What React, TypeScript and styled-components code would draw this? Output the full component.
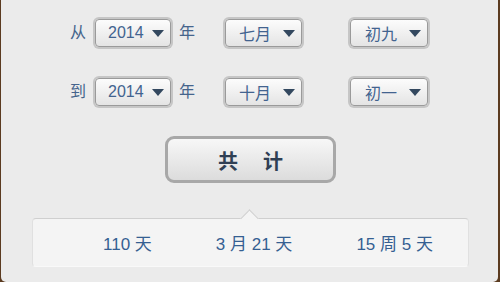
import React from "react";
import styled, { createGlobalStyle } from "styled-components";

const Global = createGlobalStyle`
  html, body { margin: 0; padding: 0; background: #5b3b20; }
  body { font-family: "Liberation Sans", "Noto Sans CJK SC", sans-serif; }
`;

const Window = styled.div`
  box-sizing: border-box;
  width: 497px;
  height: 282px;
  margin-left: 1px;
  background: #ebebeb;
  border-radius: 0 0 5px 5px;
  padding-top: 19px;
  display: flex;
  flex-direction: column;
  align-items: stretch;
  overflow: hidden;
`;

const Row = styled.div<{ $top?: number }>`
  display: flex;
  align-items: center;
  height: 28px;
  padding-left: 69px;
  margin-top: ${(p) => p.$top ?? 0}px;
`;

const Label = styled.span<{ $left?: number; $right?: number }>`
  font-size: 16px;
  color: #45648c;
  margin-left: ${(p) => p.$left ?? 0}px;
  margin-right: ${(p) => p.$right ?? 0}px;
  line-height: 1;
`;

const Select = styled.div<{ $w: number; $left?: number; $pl?: number }>`
  box-sizing: border-box;
  width: ${(p) => p.$w}px;
  height: 28px;
  margin-left: ${(p) => p.$left ?? 0}px;
  border: 1px solid #9a9a9a;
  border-radius: 4px;
  box-shadow: 0 0 0 2px #c6c6c6;
  background: linear-gradient(#fcfcfc, #e4e4e4);
  display: flex;
  align-items: center;
  justify-content: space-between;
  padding: 0 6px 0 ${(p) => p.$pl ?? 12}px;
  font-size: 16px;
  color: #42638f;
`;

const Arrow = styled.span`
  width: 0;
  height: 0;
  border-left: 6.5px solid transparent;
  border-right: 6.5px solid transparent;
  border-top: 7px solid #33485f;
  margin-top: 1px;
`;

const Button = styled.div`
  box-sizing: border-box;
  align-self: flex-start;
  margin: 30px 0 0 164px;
  width: 171px;
  height: 47px;
  border: 3px solid #a8a8a8;
  border-radius: 9px;
  background: linear-gradient(#f7f7f7, #dcdcdc);
  display: flex;
  align-items: center;
  justify-content: center;
  gap: 25px;
  padding-top: 1px;
  font-size: 20px;
  font-weight: bold;
  color: #2f3f54;
`;

const Panel = styled.div`
  position: relative;
  box-sizing: border-box;
  align-self: flex-start;
  margin: 35px 0 0 31px;
  width: 437px;
  height: 49px;
  background: #f4f4f4;
  border-top: 1px solid #cfcfcf;
  border-left: 1px solid #e0e0e0;
  border-right: 1px solid #e0e0e0;
  border-bottom: 1px solid #f9f9f9;
  border-radius: 4px;
  display: flex;
  align-items: center;
  padding: 4px 0 0 70px;
  gap: 64px;
  font-size: 17px;
  color: #355f92;

  &::before {
    content: "";
    position: absolute;
    left: 210px;
    top: -7px;
    width: 12px;
    height: 12px;
    background: #f4f4f4;
    border-top: 1px solid #cfcfcf;
    border-left: 1px solid #cfcfcf;
    transform: rotate(45deg);
  }
`;

const Result = styled.span`
  position: relative;
  line-height: 1;
  white-space: pre;
`;

export default function App() {
  return (
    <>
      <Global />
      <Window>
        <Row>
          <Label $right={9}>从</Label>
          <Select $w={76}>
            2014<Arrow />
          </Select>
          <Label $left={8}>年</Label>
          <Select $w={77} $left={30} $pl={13}>
            七月<Arrow />
          </Select>
          <Select $w={78} $left={48} $pl={14}>
            初九<Arrow />
          </Select>
        </Row>
        <Row $top={31}>
          <Label $right={9}>到</Label>
          <Select $w={76}>
            2014<Arrow />
          </Select>
          <Label $left={8}>年</Label>
          <Select $w={77} $left={30} $pl={13}>
            十月<Arrow />
          </Select>
          <Select $w={78} $left={48} $pl={14}>
            初一<Arrow />
          </Select>
        </Row>
        <Button>
          <span>共</span>
          <span>计</span>
        </Button>
        <Panel>
          <Result>110 天</Result>
          <Result>3 月 21 天</Result>
          <Result>15 周 5 天</Result>
        </Panel>
      </Window>
    </>
  );
}
